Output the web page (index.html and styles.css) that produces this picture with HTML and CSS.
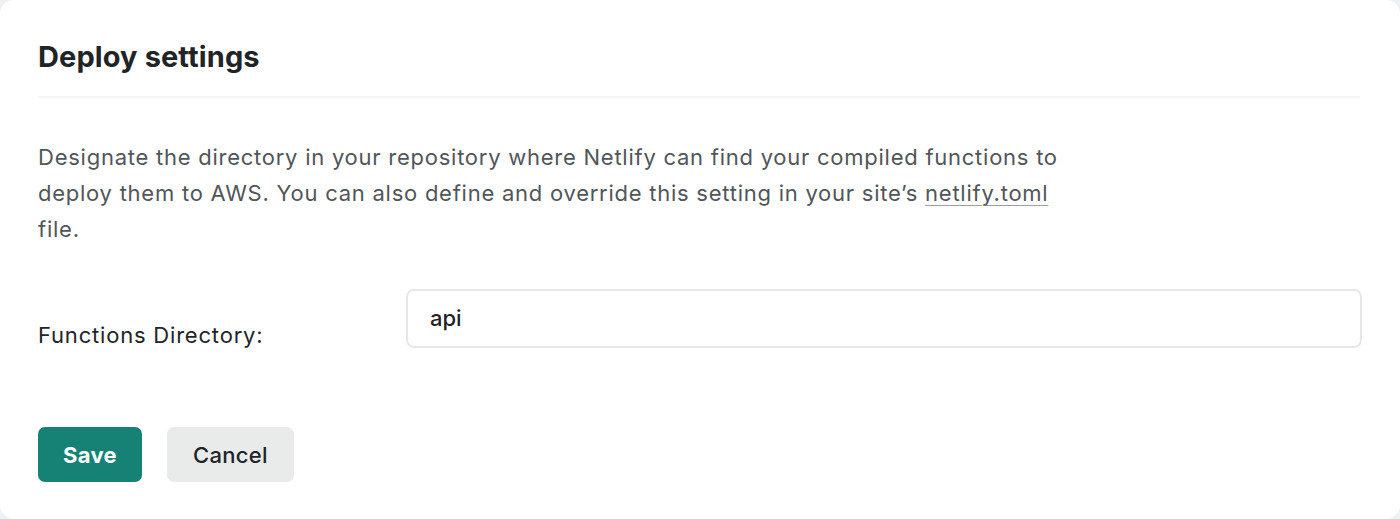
FILE: index.html
```html
<!DOCTYPE html>
<html>
<head>
<meta charset="utf-8">
<link rel="stylesheet" href="styles.css">
</head>
<body>
<section class="card">
  <h2 class="title">Deploy settings</h2>
  <hr class="divider">
  <p class="desc">Designate the directory in your repository where Netlify can find your compiled functions to deploy them to AWS. You can also define and override this setting in your site’s <a class="link" href="#">netlify.toml</a> file.</p>
  <div class="field">
    <label class="label" for="fd">Functions Directory:</label>
    <input id="fd" class="input" type="text" value="api">
  </div>
  <div class="actions">
    <button class="btn btn-primary">Save</button>
    <button class="btn btn-secondary">Cancel</button>
  </div>
</section>
</body>
</html>
```

FILE: styles.css
```css
html, body {
  margin: 0;
  padding: 0;
  background: #eef1f1;
}
body {
  font-family: Inter, "Noto Sans", sans-serif;
  width: 1400px;
  height: 519px;
  overflow: hidden;
}
.card {
  box-sizing: border-box;
  width: 1400px;
  height: 519px;
  background: #ffffff;
  border-radius: 14px;
  padding: 38px 38px 0 38px;
}
.title {
  margin: 0;
  font-size: 29px;
  font-weight: 700;
  color: #1f2427;
  line-height: 38px;
  letter-spacing: 0.1px;
}
.divider {
  border: 0;
  height: 2px;
  background: #f3f6f6;
  margin: 20px 0 0 0;
  width: 1322px;
}
.desc {
  margin: 41px 0 0 0;
  width: 1040px;
  font-size: 22px;
  line-height: 36px;
  letter-spacing: 0.75px;
  color: #515659;
}
.link {
  color: #515659;
  text-decoration: underline;
  text-decoration-color: #9ba0a2;
  text-underline-offset: 4px;
  text-decoration-thickness: 1px;
}
.field {
  display: flex;
  align-items: center;
  margin-top: 42px;
}
.label {
  width: 368px;
  font-size: 22px;
  letter-spacing: 0.8px;
  color: #212528;
  padding-top: 32px;
}
.input {
  box-sizing: border-box;
  width: 956px;
  height: 59px;
  border: 2px solid #e6e8e8;
  border-radius: 8px;
  padding: 0 0 2px 22px;
  font-family: inherit;
  font-size: 22px;
  font-weight: 500;
  color: #1f2427;
  background: #fff;
  outline: none;
}
.actions {
  display: flex;
  gap: 25px;
  margin-top: 79px;
}
.btn {
  height: 55px;
  border: 0;
  border-radius: 7px;
  font-family: inherit;
  font-size: 22px;
  padding: 0;
  letter-spacing: 0.3px;
}
.btn-primary {
  width: 104px;
  background: #158275;
  color: #fff;
  font-weight: 700;
}
.btn-secondary {
  width: 127px;
  background: #e9ebeb;
  color: #202427;
  font-weight: 500;
}
```
